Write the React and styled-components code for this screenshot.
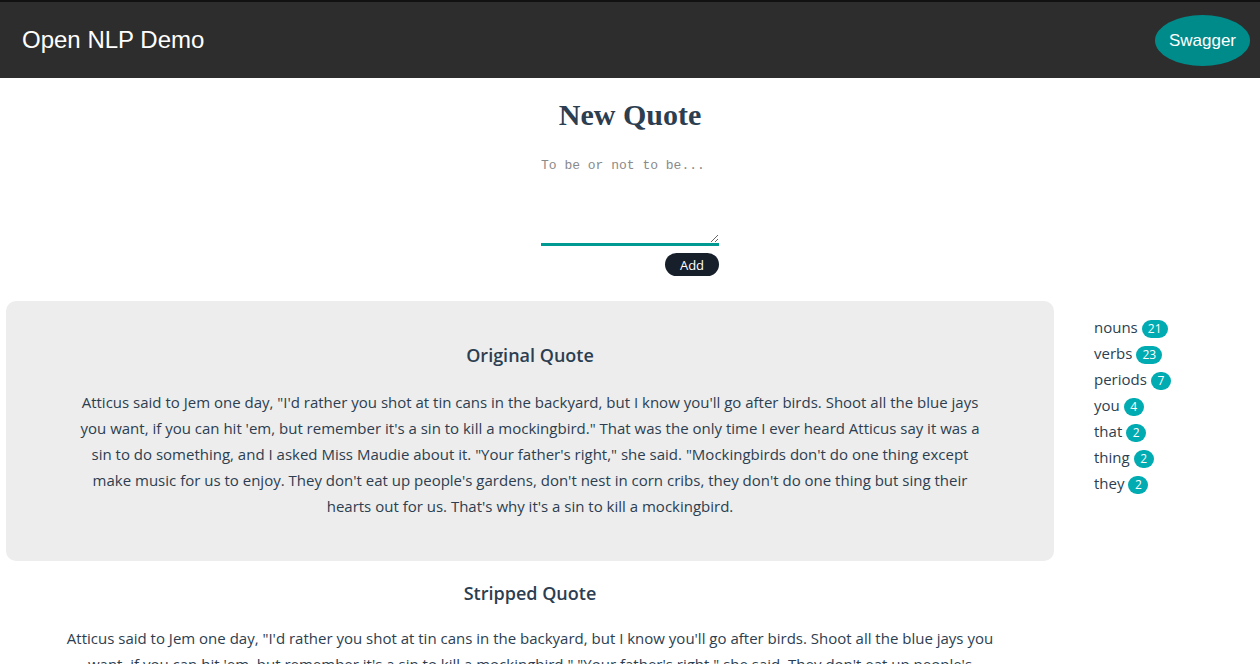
import React from 'react';
import styled, { createGlobalStyle } from 'styled-components';

const GlobalStyle = createGlobalStyle`
  body {
    margin: 0;
    background: #fff;
    font-family: 'Open Sans', sans-serif;
    color: #2c3e50;
    overflow: hidden;
  }
`;

const Header = styled.header`
  height: 76px;
  border-top: 2px solid #111;
  background: #2d2d2d;
  display: flex;
  align-items: center;
  justify-content: space-between;
  padding: 0 10px 0 22px;
`;

const Brand = styled.div`
  font-family: 'Liberation Sans', Arial, sans-serif;
  font-size: 24px;
  color: #fff;
`;

const SwaggerButton = styled.button`
  width: 95px;
  height: 51px;
  margin-top: 1px;
  border: none;
  border-radius: 50%;
  background: #008b8b;
  color: #fff;
  font-family: 'Liberation Sans', Arial, sans-serif;
  font-size: 17px;
  cursor: pointer;
`;

const NewQuote = styled.section`
  display: flex;
  flex-direction: column;
  align-items: center;
  padding-top: 20px;
`;

const Title = styled.h1`
  margin: 0;
  font-family: 'Liberation Serif', serif;
  font-weight: 700;
  font-size: 30px;
  line-height: 34px;
  color: #2c3e50;
`;

const Form = styled.form`
  width: 178px;
  display: flex;
  flex-direction: column;
  align-items: flex-end;
  margin-top: 18px;
`;

const Input = styled.textarea`
  box-sizing: border-box;
  width: 178px;
  height: 96px;
  border: none;
  border-bottom: 3px solid #009a93;
  outline: none;
  padding: 8px 0 0 0;
  font-family: 'Liberation Mono', monospace;
  font-size: 13px;
  color: #333;
  background: #fff;
  &::placeholder {
    color: #8a8a8a;
  }
`;

const AddButton = styled.button`
  margin-top: 7px;
  width: 54px;
  height: 23px;
  border: none;
  border-radius: 12px;
  background: #17202a;
  color: #fff;
  font-family: 'Open Sans', sans-serif;
  font-size: 13px;
  padding: 0;
`;

const Main = styled.div`
  display: flex;
  align-items: flex-start;
  margin-top: 25px;
`;

const Quotes = styled.div`
  width: 1060px;
  flex-shrink: 0;
`;

const Card = styled.div`
  margin: 0 6px;
  padding: 40px 68px 42px;
  background: #ededed;
  border-radius: 10px;
  text-align: center;
`;

const Block = styled.div`
  padding: 18px 60px 0;
  text-align: center;
`;

const Heading = styled.h3`
  margin: 0;
  font-size: 18px;
  line-height: 28px;
  font-weight: 600;
  color: #2c3e50;
`;

const Text = styled.p`
  margin: ${(p) => (p.$tight ? '18px' : '20px')} 0 0;
  font-size: 15px;
  line-height: 26px;
  color: #2c3e50;
`;

const Sidebar = styled.ul`
  list-style: none;
  margin: 13px 0 0;
  padding: 0 0 0 34px;
`;

const Item = styled.li`
  font-size: 15px;
  line-height: 26px;
  color: #2c3e50;
`;

const Badge = styled.span`
  display: inline-block;
  min-width: 8px;
  padding: 0 6px;
  margin-left: 4px;
  height: 18px;
  line-height: 18px;
  border-radius: 9px;
  background: #00acb1;
  color: #fff;
  font-size: 12px;
  text-align: center;
`;

const original =
  'Atticus said to Jem one day, "I\'d rather you shot at tin cans in the backyard, but I know you\'ll go after birds. Shoot all the blue jays you want, if you can hit \'em, but remember it\'s a sin to kill a mockingbird." That was the only time I ever heard Atticus say it was a sin to do something, and I asked Miss Maudie about it. "Your father\'s right," she said. "Mockingbirds don\'t do one thing except make music for us to enjoy. They don\'t eat up people\'s gardens, don\'t nest in corn cribs, they don\'t do one thing but sing their hearts out for us. That\'s why it\'s a sin to kill a mockingbird.';

const stripped =
  'Atticus said to Jem one day, "I\'d rather you shot at tin cans in the backyard, but I know you\'ll go after birds. Shoot all the blue jays you want, if you can hit \'em, but remember it\'s a sin to kill a mockingbird." "Your father\'s right," she said. They don\'t eat up people\'s gardens, don\'t nest in corn cribs, they don\'t do one thing but sing their hearts out for us.';

const counts = [
  ['nouns', 21],
  ['verbs', 23],
  ['periods', 7],
  ['you', 4],
  ['that', 2],
  ['thing', 2],
  ['they', 2],
];

export default function App() {
  return (
    <>
      <GlobalStyle />
      <Header>
        <Brand>Open NLP Demo</Brand>
        <SwaggerButton>Swagger</SwaggerButton>
      </Header>
      <NewQuote>
        <Title>New Quote</Title>
        <Form onSubmit={(e) => e.preventDefault()}>
          <Input placeholder="To be or not to be..." />
          <AddButton type="submit">Add</AddButton>
        </Form>
      </NewQuote>
      <Main>
        <Quotes>
          <Card>
            <Heading>Original Quote</Heading>
            <Text>{original}</Text>
          </Card>
          <Block>
            <Heading>Stripped Quote</Heading>
            <Text $tight>{stripped}</Text>
          </Block>
        </Quotes>
        <Sidebar>
          {counts.map(([word, n]) => (
            <Item key={word}>
              {word}
              <Badge>{n}</Badge>
            </Item>
          ))}
        </Sidebar>
      </Main>
    </>
  );
}
